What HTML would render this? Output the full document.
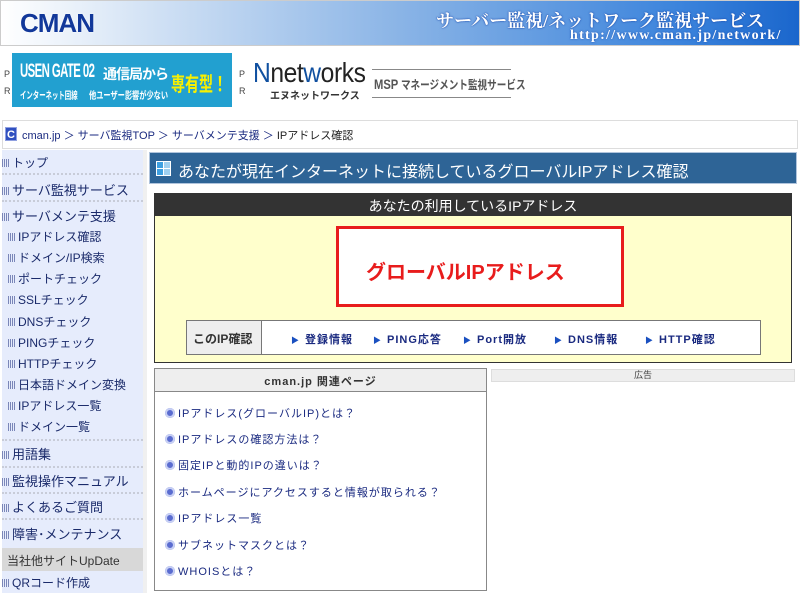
<!DOCTYPE html>
<html><head><meta charset="utf-8"><style>
*{margin:0;padding:0;box-sizing:border-box}
body{width:800px;height:593px;overflow:hidden;background:#fff;font-family:"Liberation Sans","Noto Sans CJK JP",sans-serif;position:relative;color:#222}
.a{position:absolute;white-space:nowrap}
.side .it{position:absolute;left:2px;width:141px;font-size:12px;color:#1a2a6a}
.sq{display:inline-block;width:8px;height:8px;background:repeating-linear-gradient(90deg,#7a86b8 0 1px,#e6ecfc 1px 2px);margin-right:2px;vertical-align:0}
.dl{position:absolute;left:2px;width:141px;border-top:2px dotted #c8ccd8}
.lk{position:absolute;left:165px;font-size:11px;color:#1a2a80;letter-spacing:1px}
.lk:before{content:"";display:inline-block;width:10px;height:10px;border-radius:50%;background:#5a6cd0;margin-right:3px;vertical-align:-1px;box-shadow:inset 0 0 0 2px #c8d0f4}
.nv{position:absolute;top:331px;font-size:11px;font-weight:bold;color:#1a2a80;letter-spacing:1px}
.nv:before{content:"▶";font-size:8px;color:#1a50c0;margin-right:5px}
.sx{transform-origin:left top}
</style></head><body>
<!-- header -->
<div class="a" style="left:0;top:0;width:800px;height:46px;border:1px solid #ccc;background:linear-gradient(90deg,#fff 0%,#cfe0f4 20%,#8ab4e6 50%,#3c84dc 85%,#1a66cc 100%)"></div>
<div class="a" style="left:20px;top:8px;font-size:26px;font-weight:bold;color:#12389a;letter-spacing:-1px;text-shadow:0 0 2px #fff">CMAN</div>
<div class="a" style="left:436px;top:7px;font-size:18px;font-weight:bold;color:#fff;text-shadow:0 0 2px #2050b0,0 0 1px #2050b0;font-family:'Liberation Serif','Noto Serif CJK SC',serif">サーバー監視/ネットワーク監視サービス</div>
<div class="a" style="left:570px;top:28px;font-size:14px;font-weight:bold;color:#fff;letter-spacing:1.3px;text-shadow:0 0 2px #2050b0;font-family:'Liberation Serif',serif">http://www.cman.jp/network/</div>
<!-- ads -->
<div class="a" style="left:4px;top:66px;font-size:9px;line-height:17px;color:#444">P<br>R</div>
<div class="a" style="left:12px;top:53px;width:220px;height:54px;background:#22a0d0"></div>
<div class="a sx" style="left:20px;top:61px;font-size:19px;font-weight:bold;color:#fff;letter-spacing:-1px;transform:scaleX(.6)">USEN GATE 02</div>
<div class="a sx" style="left:20px;top:87px;font-size:10px;font-weight:bold;color:#fff;transform:scaleX(.64)">インターネット回線</div>
<div class="a" style="left:103px;top:64px;font-size:14px;font-weight:bold;color:#fff;letter-spacing:-1px">通信局から</div>
<div class="a sx" style="left:89px;top:87px;font-size:10px;font-weight:bold;color:#fff;transform:scaleX(.72)">他ユーザー影響が少ない</div>
<div class="a sx" style="left:171px;top:68px;font-size:20px;font-weight:bold;color:#f8f000;transform:scaleX(.7)">専有型！</div>
<div class="a" style="left:239px;top:66px;font-size:9px;line-height:17px;color:#444">P<br>R</div>
<div class="a sx" style="left:253px;top:58px;font-size:28px;color:#222;letter-spacing:-0.5px;line-height:30px;transform:scaleX(.88)"><span style="color:#1050a0">N</span>net<span style="color:#1050a0">w</span>orks</div>
<div class="a" style="left:270px;top:87px;font-size:10px;font-weight:bold;color:#333">エヌネットワークス</div>
<div class="a" style="left:372px;top:69px;width:139px;height:29px;border-top:1px solid #888;border-bottom:1px solid #888"></div>
<div class="a sx" style="left:374px;top:76px;font-size:12px;font-weight:bold;color:#555;transform:scaleX(.8)"><span style="font-size:14px">MSP</span> マネージメント監視サービス</div>
<!-- breadcrumb -->
<div class="a" style="left:2px;top:120px;width:796px;height:29px;border:1px solid #ddd"></div>
<div class="a" style="left:5px;top:127px;width:12px;height:14px;background:#3050c0;color:#fff;font-size:11px;font-weight:bold;text-align:center;line-height:14px;border:1px solid #90a0e0">C</div>
<div class="a" style="left:22px;top:127px;font-size:11px;color:#1a2a80">cman.jp ＞ サーバ監視TOP ＞ サーバメンテ支援 ＞ <span style="color:#222">IPアドレス確認</span></div>
<!-- sidebar -->
<div class="side">
<div class="a" style="left:2px;top:150px;width:141px;height:398px;background:#e6ecfc"></div>
<div class="a" style="left:143px;top:150px;width:4px;height:443px;background:#f0f0f0"></div>
<div class="it" style="top:154px"><span class="sq"></span>トップ</div>
<div class="dl" style="top:173px"></div>
<div class="it" style="top:180px;font-size:13px"><span class="sq"></span>サーバ監視サービス</div>
<div class="dl" style="top:200px"></div>
<div class="it" style="top:206px;font-size:13px"><span class="sq"></span>サーバメンテ支援</div>
<div class="it" style="top:228px;left:8px"><span class="sq"></span>IPアドレス確認</div>
<div class="it" style="top:249px;left:8px"><span class="sq"></span>ドメイン/IP検索</div>
<div class="it" style="top:270px;left:8px"><span class="sq"></span>ポートチェック</div>
<div class="it" style="top:291px;left:8px"><span class="sq"></span>SSLチェック</div>
<div class="it" style="top:313px;left:8px"><span class="sq"></span>DNSチェック</div>
<div class="it" style="top:334px;left:8px"><span class="sq"></span>PINGチェック</div>
<div class="it" style="top:355px;left:8px"><span class="sq"></span>HTTPチェック</div>
<div class="it" style="top:376px;left:8px"><span class="sq"></span>日本語ドメイン変換</div>
<div class="it" style="top:397px;left:8px"><span class="sq"></span>IPアドレス一覧</div>
<div class="it" style="top:418px;left:8px"><span class="sq"></span>ドメイン一覧</div>
<div class="dl" style="top:439px"></div>
<div class="it" style="top:444px;font-size:13px"><span class="sq"></span>用語集</div>
<div class="dl" style="top:466px"></div>
<div class="it" style="top:471px;font-size:13px"><span class="sq"></span>監視操作マニュアル</div>
<div class="dl" style="top:492px"></div>
<div class="it" style="top:497px;font-size:13px"><span class="sq"></span>よくあるご質問</div>
<div class="dl" style="top:518px"></div>
<div class="it" style="top:524px;font-size:13px"><span class="sq"></span>障害･メンテナンス</div>
<div class="a" style="left:2px;top:548px;width:141px;height:23px;background:#d8d8d8"></div>
<div class="it" style="top:552px;left:7px;color:#333">当社他サイトUpDate</div>
<div class="a" style="left:2px;top:571px;width:141px;height:22px;background:#e6ecfc"></div>
<div class="it" style="top:574px;font-size:12px"><span class="sq"></span>QRコード作成</div>
</div>
<!-- main title -->
<div class="a" style="left:149px;top:152px;width:648px;height:32px;background:#2e6496;border:1px solid #b0c4dc"></div>
<div class="a" style="left:156px;top:161px;width:15px;height:15px;border:1px solid #fff;background:linear-gradient(90deg,transparent 6px,#fff 6px 7px,transparent 7px),linear-gradient(transparent 6px,#fff 6px 7px,transparent 7px),linear-gradient(90deg,#3fa0e0 50%,#a0d0f0 50%)"></div>
<div class="a" style="left:178px;top:158px;font-size:16px;color:#fff">あなたが現在インターネットに接続しているグローバルIPアドレス確認</div>
<!-- IP box -->
<div class="a" style="left:154px;top:193px;width:638px;height:170px;background:#ffffcc;border:1px solid #333"></div>
<div class="a" style="left:155px;top:194px;width:636px;height:22px;background:#333"></div>
<div class="a" style="left:155px;top:196px;width:636px;text-align:center;font-size:14px;color:#fff">あなたの利用しているIPアドレス</div>
<div class="a" style="left:336px;top:226px;width:288px;height:81px;background:#fff;border:3px solid #e81c1c"></div>
<div class="a" style="left:366px;top:256px;font-size:20px;font-weight:bold;color:#e81c1c">グローバルIPアドレス</div>
<div class="a" style="left:186px;top:320px;width:575px;height:35px;background:#fff;border:1px solid #777"></div>
<div class="a" style="left:187px;top:321px;width:75px;height:33px;background:#eee;border-right:1px solid #777"></div>
<div class="a" style="left:193px;top:330px;font-size:12px;font-weight:bold;color:#333">このIP確認</div>
<div class="nv" style="left:291px">登録情報</div>
<div class="nv" style="left:373px">PING応答</div>
<div class="nv" style="left:463px">Port開放</div>
<div class="nv" style="left:554px">DNS情報</div>
<div class="nv" style="left:645px">HTTP確認</div>
<!-- related -->
<div class="a" style="left:154px;top:368px;width:333px;height:223px;border:1px solid #888"></div>
<div class="a" style="left:155px;top:369px;width:331px;height:23px;background:#eee;border-bottom:1px solid #888"></div>
<div class="a" style="left:155px;top:373px;width:331px;text-align:center;font-size:11px;font-weight:bold;color:#333;letter-spacing:1px">cman.jp 関連ページ</div>
<div class="lk" style="top:405px">IPアドレス(グローバルIP)とは？</div>
<div class="lk" style="top:431px">IPアドレスの確認方法は？</div>
<div class="lk" style="top:457px">固定IPと動的IPの違いは？</div>
<div class="lk" style="top:484px">ホームページにアクセスすると情報が取られる？</div>
<div class="lk" style="top:510px">IPアドレス一覧</div>
<div class="lk" style="top:537px">サブネットマスクとは？</div>
<div class="lk" style="top:563px">WHOISとは？</div>
<div class="a" style="left:491px;top:369px;width:304px;height:13px;background:#eee;border:1px solid #ddd;font-size:9px;text-align:center;line-height:11px;color:#444">広告</div>
</body></html>
